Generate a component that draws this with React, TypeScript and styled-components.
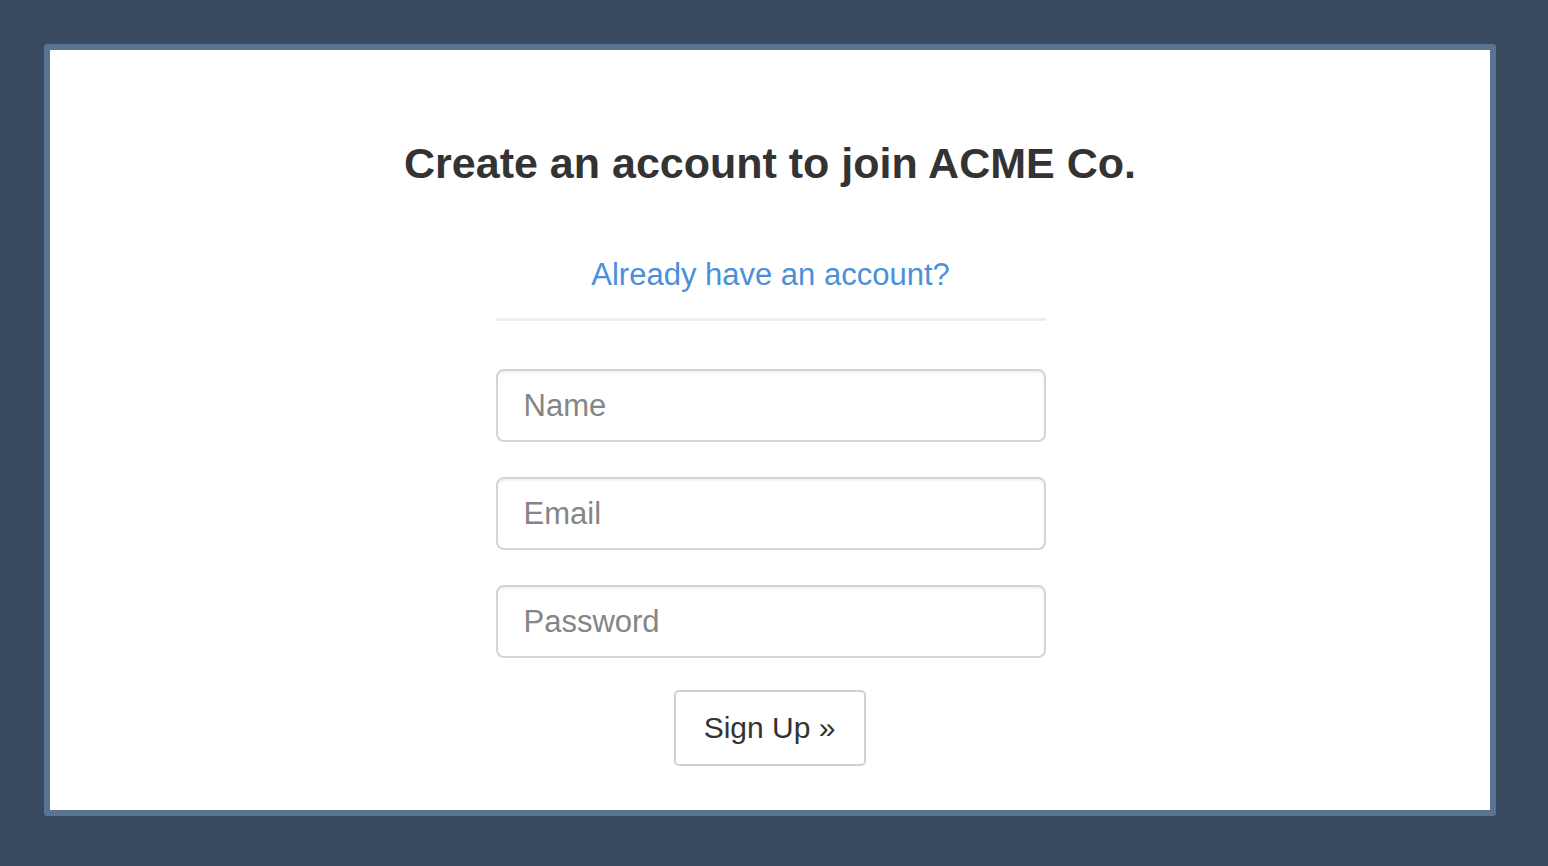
import React from "react";
import styled, { createGlobalStyle } from "styled-components";

const GlobalStyle = createGlobalStyle`
  html, body {
    margin: 0;
    padding: 0;
    background: #384a5f;
    font-family: "Liberation Sans", Arial, sans-serif;
  }
  * {
    box-sizing: border-box;
  }
`;

const Frame = styled.div`
  width: 1452px;
  height: 772px;
  margin: 44px 0 0 44px;
  border: 6px solid #5a7591;
  border-radius: 3px;
  background: #fff;
  padding-top: 90px;
  display: flex;
  flex-direction: column;
  align-items: center;
`;

const Title = styled.h1`
  margin: 0;
  font-size: 43px;
  line-height: 47px;
  font-weight: 700;
  color: #333;
`;

const Form = styled.form`
  width: 550px;
  margin: 70px 0 0 1px;
  display: flex;
  flex-direction: column;
  align-items: center;
`;

const LoginLink = styled.a`
  font-size: 31px;
  line-height: 36px;
  color: #4a90d9;
  text-decoration: none;
  cursor: pointer;
`;

const Divider = styled.hr`
  width: 100%;
  height: 3px;
  margin: 25px 0 48px;
  border: 0;
  background: #eeeeee;
`;

const Field = styled.input`
  width: 100%;
  height: 73px;
  margin-bottom: 35px;
  padding: 0 26px;
  border: 2px solid #d4d4d4;
  border-radius: 8px;
  box-shadow: inset 0 2px 2px rgba(0, 0, 0, 0.05);
  font-family: inherit;
  font-size: 31px;
  color: #333;
  outline: none;

  &::placeholder {
    color: #858585;
  }
`;

const SubmitButton = styled.button`
  width: 192px;
  height: 76px;
  margin: -3px 0 0 -2px;
  border: 2px solid #d2d2d2;
  border-radius: 5px;
  background: #fff;
  font-family: inherit;
  font-size: 30px;
  color: #333;
  cursor: pointer;
`;

export default function App() {
  return (
    <>
      <GlobalStyle />
      <Frame>
        <Title>Create an account to join ACME Co.</Title>
        <Form onSubmit={(e) => e.preventDefault()}>
          <LoginLink>Already have an account?</LoginLink>
          <Divider />
          <Field type="text" placeholder="Name" />
          <Field type="email" placeholder="Email" />
          <Field type="password" placeholder="Password" />
          <SubmitButton type="submit">Sign Up »</SubmitButton>
        </Form>
      </Frame>
    </>
  );
}
